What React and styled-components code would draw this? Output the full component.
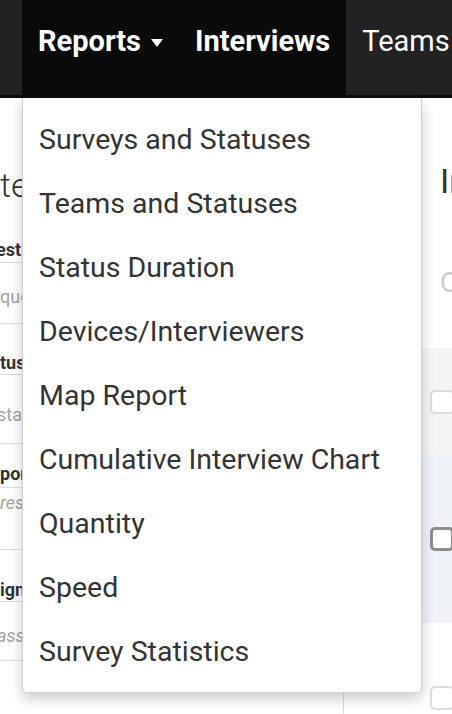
import React from "react";
import styled, { createGlobalStyle } from "styled-components";

const Global = createGlobalStyle`
  html, body { margin: 0; padding: 0; background: #fff; }
  body { font-family: Roboto, "Liberation Sans", Arial, sans-serif; overflow: hidden; width: 452px; height: 714px; }
  * { box-sizing: border-box; }
`;

const Page = styled.div`
  width: 452px;
  height: 714px;
  overflow: hidden;
  position: relative;
`;

const Navbar = styled.nav`
  display: flex;
  height: 98px;
  padding-left: 22px;
  background: #222;
  border-bottom: 3px solid #0c0c0c;
  position: relative;
  z-index: 10;
`;

const NavGroup = styled.ul`
  display: flex;
  margin: 0;
  padding: 0;
  list-style: none;
  background: ${(p) => (p.$active ? "#0a0a0a" : "transparent")};
`;

const NavItem = styled.li`
  position: relative;
  display: flex;
`;

const NavLink = styled.a`
  display: flex;
  align-items: flex-start;
  gap: 10px;
  height: 95px;
  padding: 27px 16px 0;
  font-size: 29px;
  line-height: 29px;
  font-weight: ${(p) => (p.$bold ? 700 : 400)};
  color: #fff;
  white-space: nowrap;
  text-decoration: none;
  cursor: pointer;
`;

const Caret = styled.span`
  display: inline-block;
  width: 0;
  height: 0;
  margin-top: 12px;
  border-top: 8px solid #fff;
  border-left: 6.5px solid transparent;
  border-right: 6.5px solid transparent;
`;

const Dropdown = styled.ul`
  position: absolute;
  top: calc(100% + 3px);
  left: 0;
  width: 400px;
  margin: 0;
  padding: 10px 0 8px;
  list-style: none;
  background: #fff;
  border: 1px solid rgba(0, 0, 0, 0.18);
  border-top: 0;
  border-radius: 0 0 5px 5px;
  box-shadow: 0 6px 14px rgba(0, 0, 0, 0.2);
`;

const DropItem = styled.li`
  height: 64px;
  line-height: 64px;
  padding: 0 16px;
  font-size: 28.5px;
  font-weight: 400;
  color: #333;
  white-space: nowrap;
`;

const Main = styled.div`
  display: flex;
  height: 616px;
`;

const LeftPanel = styled.section`
  width: 344px;
  flex: none;
  border-right: 1px solid #ddd;
  overflow: hidden;
`;

const LeftTitle = styled.h2`
  margin: 67px 0 36px;
  font-size: 34px;
  line-height: 40px;
  font-weight: 300;
  color: #333;
  white-space: nowrap;
`;

const Cell = styled.div`
  display: flex;
  align-items: flex-end;
  height: ${(p) => p.$h}px;
  padding-bottom: ${(p) => p.$pb}px;
  border-bottom: 1px solid #ddd;
  font-size: 18px;
  line-height: 22px;
  white-space: nowrap;
  text-indent: ${(p) => p.$cut || 0}px;
  color: ${(p) => (p.$label ? "#333" : "#a3a3a3")};
  font-weight: ${(p) => (p.$label ? 700 : 400)};
  font-style: ${(p) => (p.$italic ? "italic" : "normal")};
`;

const RightPanel = styled.section`
  flex: 1;
  min-width: 0;
  overflow: hidden;
`;

const RightTitle = styled.h1`
  margin: 63px 0 0 96px;
  font-size: 34px;
  line-height: 40px;
  font-weight: 400;
  color: #333;
  white-space: nowrap;
`;

const Search = styled.div`
  margin: 66px 0 0 96px;
  font-size: 28px;
  line-height: 32px;
  color: #ccc;
  white-space: nowrap;
`;

const Table = styled.div`
  margin-top: 49px;
`;

const Row = styled.div`
  display: flex;
  align-items: center;
  height: ${(p) => p.$h}px;
  padding-left: 86px;
  background: ${(p) => p.$bg};
`;

const Check = styled.span`
  width: 24px;
  height: 24px;
  flex: none;
  border: ${(p) => (p.$dark ? "3px solid #8c8c8c" : "2px solid #dcdcdc")};
  border-radius: 5px;
  background: #fff;
`;

const menu = [
  "Surveys and Statuses",
  "Teams and Statuses",
  "Status Duration",
  "Devices/Interviewers",
  "Map Report",
  "Cumulative Interview Chart",
  "Quantity",
  "Speed",
  "Survey Statistics",
];

const cells = [
  { t: "estionnaire", label: true, h: 22, pb: 1, cut: -4 },
  { t: "questionnaire", h: 61, pb: 15 },
  { t: "tus", label: true, h: 51, pb: 0 },
  { t: "status", h: 69, pb: 17, cut: -3 },
  { t: "ponsible", label: true, h: 44, pb: 2 },
  { t: "res, responsible", h: 62, pb: 35, italic: true },
  { t: "ignment", label: true, h: 52, pb: 0 },
  { t: "assignment", h: 59, pb: 13, italic: true, cut: -3 },
];

export default function App() {
  return (
    <Page>
      <Global />
      <Navbar>
        <NavGroup $active>
          <NavItem>
            <NavLink $bold>
              Reports <Caret />
            </NavLink>
            <Dropdown>
              {menu.map((m) => (
                <DropItem key={m}>{m}</DropItem>
              ))}
            </Dropdown>
          </NavItem>
          <NavItem>
            <NavLink $bold>Interviews</NavLink>
          </NavItem>
        </NavGroup>
        <NavGroup>
          <NavItem>
            <NavLink>Teams</NavLink>
          </NavItem>
        </NavGroup>
      </Navbar>
      <Main>
        <LeftPanel>
          <LeftTitle>te</LeftTitle>
          {cells.map((c, i) => (
            <Cell
              key={i}
              $h={c.h}
              $pb={c.pb}
              $label={c.label}
              $italic={c.italic}
              $cut={c.cut}
            >
              {c.t}
            </Cell>
          ))}
        </LeftPanel>
        <RightPanel>
          <RightTitle>Interviews</RightTitle>
          <Search>Quick search</Search>
          <Table>
            <Row $h={107} $bg="#f5f5f5">
              <Check />
            </Row>
            <Row $h={168} $bg="#eef2f7">
              <Check $dark />
            </Row>
            <Row $h={150} $bg="#fff">
              <Check />
            </Row>
          </Table>
        </RightPanel>
      </Main>
    </Page>
  );
}
